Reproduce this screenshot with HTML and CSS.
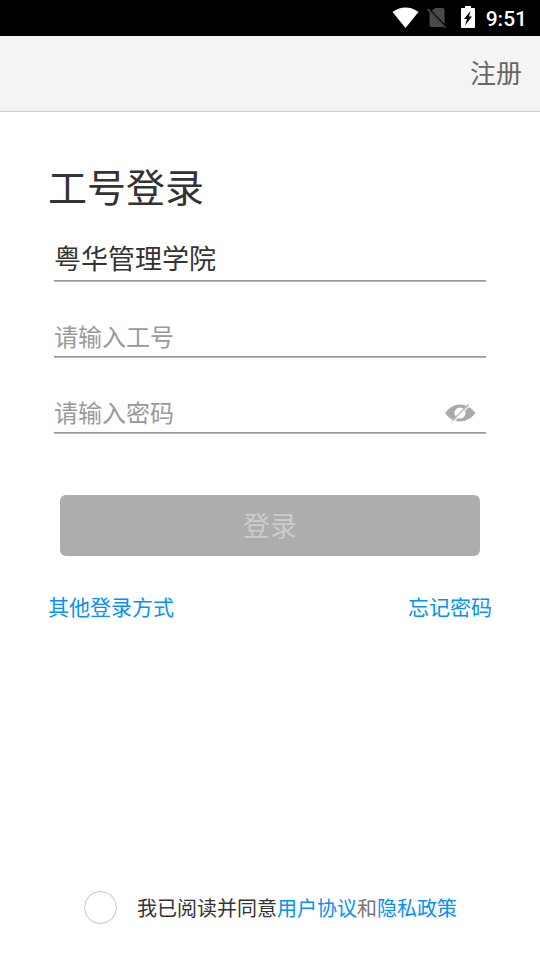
FILE: index.html
```html
<!DOCTYPE html>
<html lang="zh-CN">
<head>
<meta charset="utf-8">
<title>工号登录</title>
<link rel="stylesheet" href="styles.css">
</head>
<body>
<div class="status">
  <svg class="wifi" width="28" height="22" viewBox="0 0 28 22"><path fill="#fff" d="M.5 5Q13.5-3.8 26.5 5L13.5 21Z"/></svg>
  <svg class="sim" width="20" height="22" viewBox="0 0 20 22"><path fill="#4a4a4a" d="M8 1H15.500Q17.500 1 17.500 3V17.500L4.500 4ZM2.500 5L16.500 19.500Q16 20 15.500 20H4.500Q2.500 20 2.500 18Z"/><path d="M1.500 1.500L19.500 20" stroke="#000" stroke-width="1.500"/><path d="M.7 2L18.500 20.700" stroke="#4a4a4a" stroke-width="1.500"/></svg>
  <svg class="battery" width="14" height="22" viewBox="0 0 14 22"><path fill="#fff" fill-rule="evenodd" d="M4 0H10V2H13Q14 2 14 3V21Q14 22 13 22H1Q0 22 0 21V3Q0 2 1 2H4ZM9.500 5L3 13H6L4 19.500L11 10.500H8Z"/></svg>
  <span class="clock">9:51</span>
</div>
<header class="header"><a class="register">注册</a></header>
<main class="main">
  <h1 class="title">工号登录</h1>
  <div class="field school">粤华管理学院</div>
  <div class="field hint">请输入工号</div>
  <div class="field hint">请输入密码
    <svg class="eye" width="32" height="20" viewBox="0 0 32 20"><path fill="#aaa" d="M1 10Q7 1.500 16 1.500T31.500 10Q25 18.500 16 18.500T1 10Z"/><circle cx="16" cy="10" r="5.500" fill="#fff"/><path d="M9.500 18.500L26 2" stroke="#fff" stroke-width="1.200"/><path d="M8 18L24.500 1.500" stroke="#bbb" stroke-width="1.500"/></svg>
  </div>
  <button class="login">登录</button>
  <div class="links"><a>其他登录方式</a><a>忘记密码</a></div>
</main>
<footer class="agreement"><span class="check"></span><p class="terms">我已阅读并同意<a>用户协议</a><span class="and">和</span><a>隐私政策</a></p></footer>
</body>
</html>
```
FILE: styles.css
```css
* { box-sizing: border-box; }
body { margin: 0; height: 960px; display: flex; flex-direction: column; background: #fff; color: #333; font-family: "Noto Sans CJK SC", sans-serif; }
a { color: #0590fc; }
.status { height: 36px; background: #000; display: flex; align-items: flex-start; justify-content: flex-end; padding: 6px 13px 0 0; }
.wifi { margin: 1px 7px 0 0; }
.sim { margin: 1px 14px 0 0; }
.battery { margin-right: 11px; }
.clock { font: 500 21px/24px Roboto, sans-serif; color: #fff; padding-top: 1px; }
.header { height: 76px; background: #f4f4f4; border-bottom: 1px solid #ccc; display: flex; justify-content: flex-end; padding-right: 18px; }
.header .register { color: #666; font-size: 26px; line-height: 72px; }
.main { padding: 0 48px; }
.title { margin: 44px 0 0; font-size: 39px; line-height: 58px; font-weight: 400; }
.field { height: 76px; margin: 0 6px; border-bottom: 1px solid #979797; box-shadow: 0 1px #b9b9b9; display: flex; align-items: flex-end; justify-content: space-between; line-height: 40px; }
.school { height: 67px; font-size: 27px; padding-bottom: 2px; }
.hint { color: #999; font-size: 24px; }
.eye { margin: 0 10px 9px 0; }
.login { display: block; width: 420px; height: 61px; margin: 62px auto 0; padding: 0 0 2px; border: 0; border-radius: 6px; background: #adadad; color: #ccc; font: 27px/59px "Noto Sans CJK SC", sans-serif; }
.links { display: flex; justify-content: space-between; margin-top: 35px; font-size: 21px; line-height: 31px; }
.agreement { margin-top: auto; height: 69px; display: flex; align-items: flex-start; padding-left: 84px; }
.check { width: 33px; height: 33px; border: 1.500px solid #c4c4c4; border-radius: 50%; margin-right: 20px; }
.terms { margin: 0; font-size: 20px; line-height: 34px; }
.and { color: #777; }
```
